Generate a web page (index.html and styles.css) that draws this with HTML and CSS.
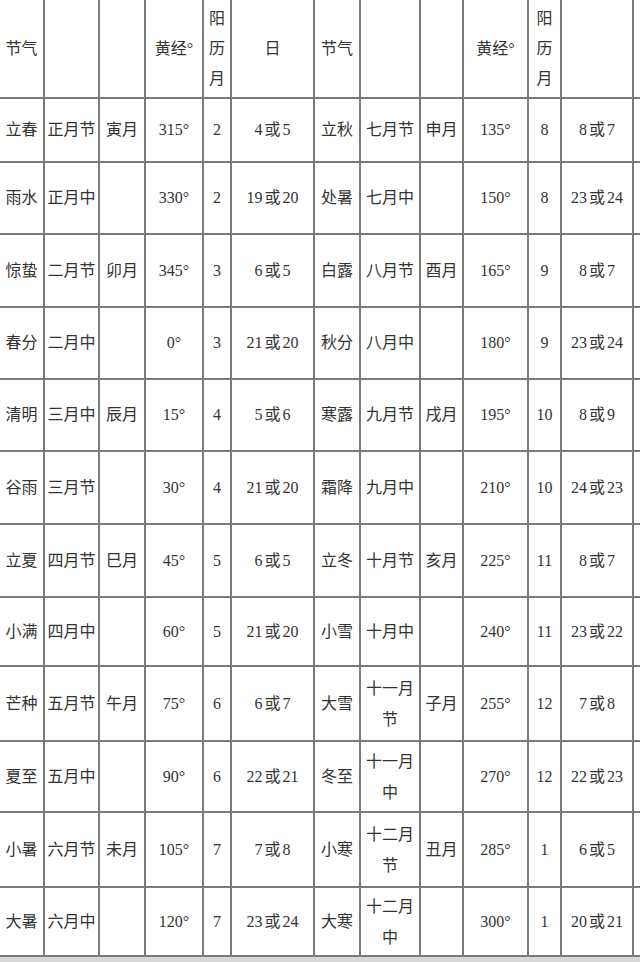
FILE: index.html
```html
<!DOCTYPE html>
<html lang="zh">
<head>
<meta charset="utf-8">
<title>二十四节气表</title>
<link rel="stylesheet" href="styles.css">
</head>
<body>
<div class="sheet">
  <div class="c">节气</div><div class="c"></div><div class="c"></div><div class="c">黄经°</div><div class="c stack">阳<br>历<br>月</div><div class="c">日</div>
  <div class="c">节气</div><div class="c"></div><div class="c"></div><div class="c">黄经°</div><div class="c stack">阳<br>历<br>月</div><div class="c"></div><div class="c e"></div>

  <div class="c">立春</div><div class="c">正月节</div><div class="c">寅月</div><div class="c">315°</div><div class="c">2</div><div class="c">4<span class="or">或</span>5</div>
  <div class="c">立秋</div><div class="c">七月节</div><div class="c">申月</div><div class="c">135°</div><div class="c">8</div><div class="c">8<span class="or">或</span>7</div><div class="c e"></div>

  <div class="c">雨水</div><div class="c">正月中</div><div class="c"></div><div class="c">330°</div><div class="c">2</div><div class="c">19<span class="or">或</span>20</div>
  <div class="c">处暑</div><div class="c">七月中</div><div class="c"></div><div class="c">150°</div><div class="c">8</div><div class="c">23<span class="or">或</span>24</div><div class="c e"></div>

  <div class="c">惊蛰</div><div class="c">二月节</div><div class="c">卯月</div><div class="c">345°</div><div class="c">3</div><div class="c">6<span class="or">或</span>5</div>
  <div class="c">白露</div><div class="c">八月节</div><div class="c">酉月</div><div class="c">165°</div><div class="c">9</div><div class="c">8<span class="or">或</span>7</div><div class="c e"></div>

  <div class="c">春分</div><div class="c">二月中</div><div class="c"></div><div class="c">0°</div><div class="c">3</div><div class="c">21<span class="or">或</span>20</div>
  <div class="c">秋分</div><div class="c">八月中</div><div class="c"></div><div class="c">180°</div><div class="c">9</div><div class="c">23<span class="or">或</span>24</div><div class="c e"></div>

  <div class="c">清明</div><div class="c">三月中</div><div class="c">辰月</div><div class="c">15°</div><div class="c">4</div><div class="c">5<span class="or">或</span>6</div>
  <div class="c">寒露</div><div class="c">九月节</div><div class="c">戌月</div><div class="c">195°</div><div class="c">10</div><div class="c">8<span class="or">或</span>9</div><div class="c e"></div>

  <div class="c">谷雨</div><div class="c">三月节</div><div class="c"></div><div class="c">30°</div><div class="c">4</div><div class="c">21<span class="or">或</span>20</div>
  <div class="c">霜降</div><div class="c">九月中</div><div class="c"></div><div class="c">210°</div><div class="c">10</div><div class="c">24<span class="or">或</span>23</div><div class="c e"></div>

  <div class="c">立夏</div><div class="c">四月节</div><div class="c">巳月</div><div class="c">45°</div><div class="c">5</div><div class="c">6<span class="or">或</span>5</div>
  <div class="c">立冬</div><div class="c">十月节</div><div class="c">亥月</div><div class="c">225°</div><div class="c">11</div><div class="c">8<span class="or">或</span>7</div><div class="c e"></div>

  <div class="c">小满</div><div class="c">四月中</div><div class="c"></div><div class="c">60°</div><div class="c">5</div><div class="c">21<span class="or">或</span>20</div>
  <div class="c">小雪</div><div class="c">十月中</div><div class="c"></div><div class="c">240°</div><div class="c">11</div><div class="c">23<span class="or">或</span>22</div><div class="c e"></div>

  <div class="c">芒种</div><div class="c">五月节</div><div class="c">午月</div><div class="c">75°</div><div class="c">6</div><div class="c">6<span class="or">或</span>7</div>
  <div class="c">大雪</div><div class="c two">十一月<br>节</div><div class="c">子月</div><div class="c">255°</div><div class="c">12</div><div class="c">7<span class="or">或</span>8</div><div class="c e"></div>

  <div class="c">夏至</div><div class="c">五月中</div><div class="c"></div><div class="c">90°</div><div class="c">6</div><div class="c">22<span class="or">或</span>21</div>
  <div class="c">冬至</div><div class="c two">十一月<br>中</div><div class="c"></div><div class="c">270°</div><div class="c">12</div><div class="c">22<span class="or">或</span>23</div><div class="c e"></div>

  <div class="c">小暑</div><div class="c">六月节</div><div class="c">未月</div><div class="c">105°</div><div class="c">7</div><div class="c">7<span class="or">或</span>8</div>
  <div class="c">小寒</div><div class="c two">十二月<br>节</div><div class="c">丑月</div><div class="c">285°</div><div class="c">1</div><div class="c">6<span class="or">或</span>5</div><div class="c e"></div>

  <div class="c">大暑</div><div class="c">六月中</div><div class="c"></div><div class="c">120°</div><div class="c">7</div><div class="c">23<span class="or">或</span>24</div>
  <div class="c">大寒</div><div class="c two">十二月<br>中</div><div class="c"></div><div class="c">300°</div><div class="c">1</div><div class="c">20<span class="or">或</span>21</div><div class="c e"></div>
</div>
</body>
</html>
```

FILE: styles.css
```css
html, body {
  margin: 0;
  padding: 0;
  background: #fff;
}

body {
  width: 640px;
  height: 962px;
  overflow: hidden;
  font-family: "Liberation Serif", "Noto Sans CJK SC", serif;
  color: #333;
}

.sheet {
  display: grid;
  grid-template-columns: 45px 55px 46px 58px 28px 83px 46px 60px 43px 65px 33px 72px 6px;
  grid-template-rows: 99px 64px 72px 73px 72px 72px 73px 73px 69px 75px 71px 75px 69px;
  border-bottom: 5px solid #d8d8d8;
  width: 640px;
}

.c {
  box-sizing: border-box;
  display: flex;
  align-items: center;
  justify-content: center;
  text-align: center;
  border-right: 2px solid #7a7a7a;
  border-bottom: 2px solid #7a7a7a;
  font-size: 16px;
  line-height: 20px;
  white-space: nowrap;
}

.c.e {
  border-right: none;
}

.or {
  margin: 0 2px;
}

.stack {
  line-height: 30px;
}

.two {
  line-height: 31px;
}
```
